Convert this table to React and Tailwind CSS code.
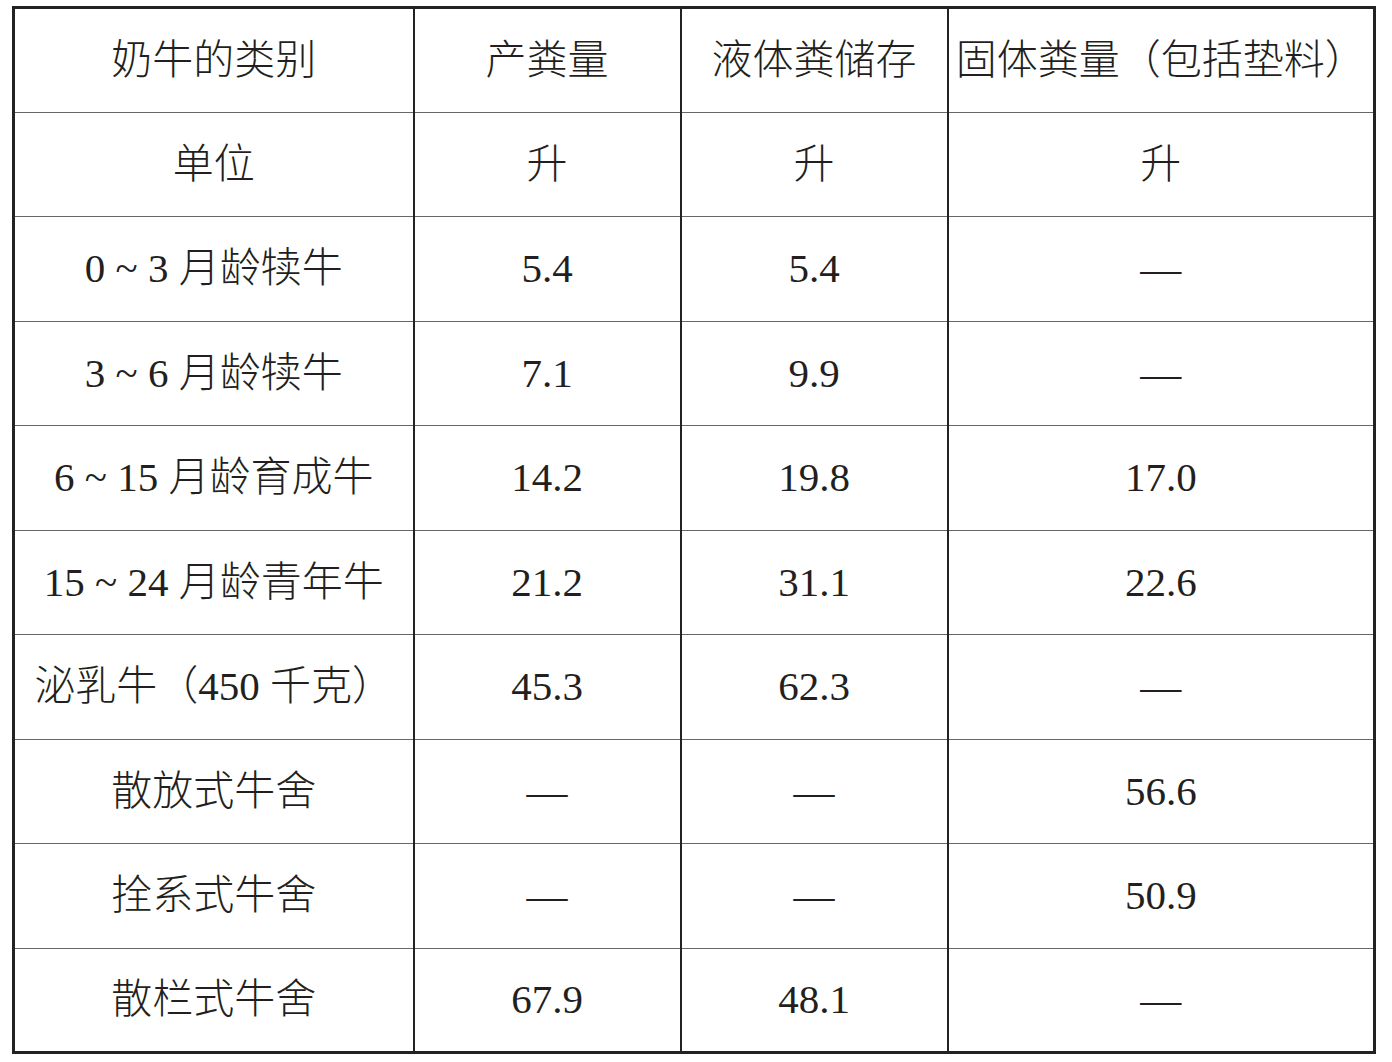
const rows = [
  ["奶牛的类别", "产粪量", "液体粪储存", "固体粪量（包括垫料）"],
  ["单位", "升", "升", "升"],
  ["0 ~ 3 月龄犊牛", "5.4", "5.4", "—"],
  ["3 ~ 6 月龄犊牛", "7.1", "9.9", "—"],
  ["6 ~ 15 月龄育成牛", "14.2", "19.8", "17.0"],
  ["15 ~ 24 月龄青年牛", "21.2", "31.1", "22.6"],
  ["泌乳牛（450 千克）", "45.3", "62.3", "—"],
  ["散放式牛舍", "—", "—", "56.6"],
  ["拴系式牛舍", "—", "—", "50.9"],
  ["散栏式牛舍", "67.9", "48.1", "—"],
];

export default function App() {
  return (
    <div className="w-[1392px] h-[1062px] bg-white pt-[6px] pl-[12px]">
      <table
        className="border-collapse border-[3px] border-[#222] text-[#231f20] text-[41px] w-[1364px]"
        style={{ fontFamily: '"Liberation Serif", "Noto Sans CJK SC", serif' }}
      >
        <colgroup>
          <col className="w-[400px]" />
          <col className="w-[267px]" />
          <col className="w-[267px]" />
          <col />
        </colgroup>
        <tbody>
          {rows.map((row, i) => (
            <tr key={i} className="h-[104.5px]">
              {row.map((cell, j) => (
                <td
                  key={j}
                  className="text-center align-middle whitespace-nowrap p-0 leading-none border-t-[1.5px] border-t-[#666] border-l-2 border-l-[#222] font-light"
                >
                  {cell}
                </td>
              ))}
            </tr>
          ))}
        </tbody>
      </table>
    </div>
  );
}
